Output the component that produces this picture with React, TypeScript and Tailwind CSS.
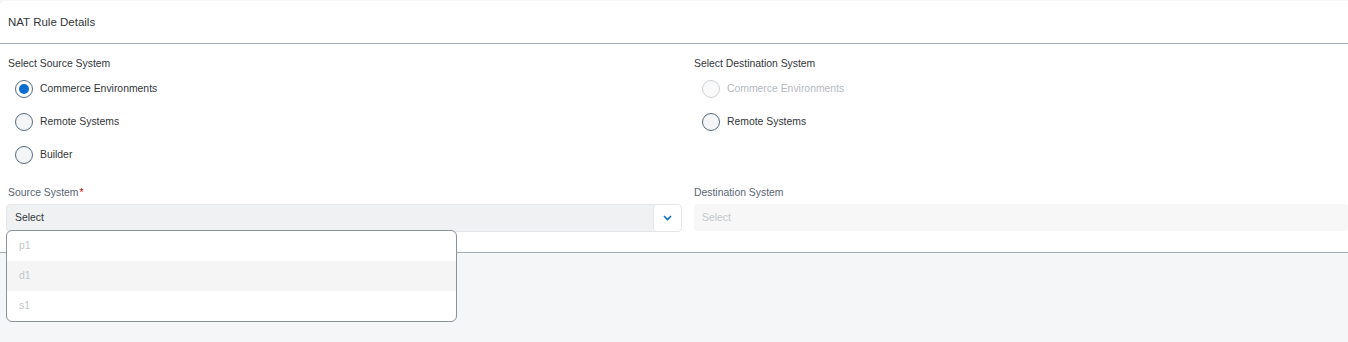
import { useState } from "react";

type Opt = { label: string; disabled?: boolean };

function Radio({ label, checked, disabled }: Opt & { checked?: boolean }) {
  return (
    <div className="flex h-[33px] items-center pl-[9px]">
      <span
        className={
          "flex h-[18px] w-[18px] items-center justify-center rounded-full border " +
          (disabled
            ? "border-[#cdd2d7] bg-[#fafafa]"
            : checked
              ? "border-[#556b82] bg-white"
              : "border-[#556b82] bg-[#f4f5f6]")
        }
      >
        {checked && <span className="h-[10px] w-[10px] rounded-full bg-[#0a6ed1]" />}
      </span>
      <span className={"ml-[7px] " + (disabled ? "text-[#b4b9be]" : "text-[#32363a]")}>{label}</span>
    </div>
  );
}

export default function App() {
  const [open] = useState(true);
  const items = ["p1", "d1", "s1"];

  return (
    <div
      className="min-h-[342px] bg-[#f5f6f7] pt-px text-[10.4px] leading-[14px] text-[#32363a]"
      style={{ fontFamily: '"Liberation Sans", Arial, sans-serif' }}
    >
      <div className="rounded-tl-[5px] bg-white">
        <div className="flex h-[43px] items-center border-b border-[#a9b0b7] pl-[8px] text-[11.5px]">NAT Rule Details</div>

        <div className="grid grid-cols-[676px_1fr] gap-x-[12px] border-b border-[#a3adb8] pb-[20px] pl-[6px] pt-[13px]">
          <div>
            <div className="pl-[2px]">Select Source System</div>
            <div className="mt-px">
              <Radio label="Commerce Environments" checked />
              <Radio label="Remote Systems" />
              <Radio label="Builder" />
            </div>
          </div>
          <div>
            <div>Select Destination System</div>
            <div className="mt-px -ml-px">
              <Radio label="Commerce Environments" disabled />
              <Radio label="Remote Systems" />
            </div>
          </div>

          <div className="mt-[15px]">
            <div className="pl-[2px] text-[#5b6573]">
              Source System<span className="ml-px text-[#bb0000]">*</span>
            </div>
            <div className="relative mt-[4px]">
              <div className="flex h-[28px] items-stretch rounded-[4px] border border-[#e4e7ea] bg-[#eff1f2]">
                <div className="flex flex-1 items-center pl-[8px]">Select</div>
                <div className="flex w-[28px] items-center justify-center rounded-[4px] border-l border-[#e4e7ea] bg-white">
                  <svg width="9" height="6" viewBox="0 0 9 6">
                    <path d="M1 1l3.5 3.5L8 1" fill="none" stroke="#0a6ed1" strokeWidth="1.6" />
                  </svg>
                </div>
              </div>
              {open && (
                <div className="absolute left-0 top-[26px] z-10 w-[451px] overflow-hidden rounded-[6px] border border-[#89919a] bg-white">
                  {items.map((it, i) => (
                    <div
                      key={it}
                      className={"flex h-[30px] items-center pl-[12px] text-[#c3c7cb] " + (i === 1 ? "bg-[#f5f5f5]" : "")}
                    >
                      {it}
                    </div>
                  ))}
                </div>
              )}
            </div>
          </div>
          <div className="mt-[15px]">
            <div className="text-[#5b6573]">Destination System</div>
            <div className="mt-[4px] flex h-[27px] items-center rounded-[3px] bg-[#f7f7f7] pl-[8px] text-[#c2c6ca]">
              Select
            </div>
          </div>
        </div>
      </div>
    </div>
  );
}
